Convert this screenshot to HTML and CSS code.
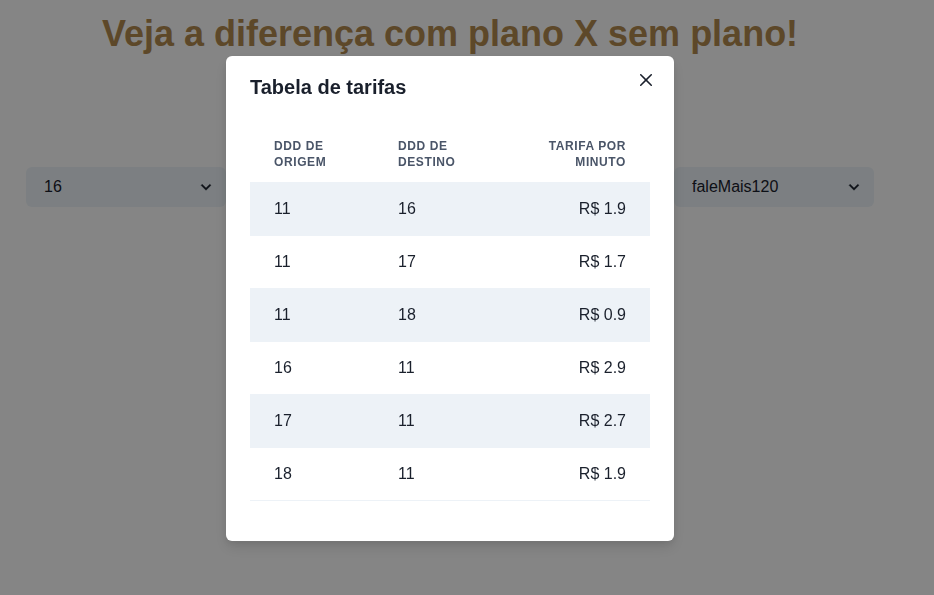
FILE: index.html
```html
<!DOCTYPE html>
<html lang="pt-BR">
<head>
<meta charset="utf-8">
<meta name="viewport" content="width=device-width, initial-scale=1">
<title>Tabela de tarifas</title>
<link rel="stylesheet" href="styles.css">
</head>
<body>
<main class="page">
  <h1 class="page-title">Veja a diferença com plano X sem plano!</h1>
  <form class="filters">
    <div class="field">
      <select class="select" aria-label="Origem"><option>16</option></select>
      <svg class="select-icon" viewBox="0 0 24 24" aria-hidden="true"><path d="M16.59 8.59L12 13.17 7.41 8.59 6 10l6 6 6-6z"/></svg>
    </div>
    <div class="field field-plan">
      <select class="select" aria-label="Plano"><option>faleMais120</option></select>
      <svg class="select-icon" viewBox="0 0 24 24" aria-hidden="true"><path d="M16.59 8.59L12 13.17 7.41 8.59 6 10l6 6 6-6z"/></svg>
    </div>
  </form>
</main>
<div class="overlay">
  <section class="modal" role="dialog" aria-modal="true" aria-labelledby="modal-title">
    <header class="modal-header">
      <h2 class="modal-title" id="modal-title">Tabela de tarifas</h2>
      <button class="close" type="button" aria-label="Fechar">
        <svg class="close-icon" viewBox="0 0 24 24" aria-hidden="true"><path d="M.439 21.44a1.5 1.5 0 0 0 2.122 2.121l9.262-9.261a.25.25 0 0 1 .354 0l9.262 9.263a1.5 1.5 0 1 0 2.122-2.121L14.3 12.177a.25.25 0 0 1 0-.354l9.263-9.262A1.5 1.5 0 0 0 21.439.44L12.177 9.7a.25.25 0 0 1-.354 0L2.561.44A1.5 1.5 0 0 0 .439 2.561L9.7 11.823a.25.25 0 0 1 0 .354z"/></svg>
      </button>
    </header>
    <div class="modal-body">
      <table class="rates">
        <thead>
          <tr><th class="col-area" scope="col">DDD de origem</th><th scope="col">DDD de destino</th><th class="price" scope="col">Tarifa por minuto</th></tr>
        </thead>
        <tbody>
          <tr><td>11</td><td>16</td><td class="price">R$ 1.9</td></tr>
          <tr><td>11</td><td>17</td><td class="price">R$ 1.7</td></tr>
          <tr><td>11</td><td>18</td><td class="price">R$ 0.9</td></tr>
          <tr><td>16</td><td>11</td><td class="price">R$ 2.9</td></tr>
          <tr><td>17</td><td>11</td><td class="price">R$ 2.7</td></tr>
          <tr><td>18</td><td>11</td><td class="price">R$ 1.9</td></tr>
        </tbody>
      </table>
    </div>
  </section>
</div>
</body>
</html>
```
FILE: styles.css
```css
* {
  box-sizing: border-box;
}

body {
  margin: 0;
  background: #fff;
  color: #1a202c;
  font: 16px/24px "Liberation Sans", Arial, sans-serif;
}

.page {
  padding: 10px 60px 0 26px;
}

.page-title {
  margin: 0;
  color: #b38b50;
  font-size: 36px;
  line-height: 48px;
  text-align: center;
}

.filters {
  display: grid;
  grid-template-columns: repeat(4, 1fr);
  gap: 16px;
  margin-top: 109px;
}

.field {
  position: relative;
}

.field-plan {
  grid-column: 4;
}

.select {
  appearance: none;
  width: 100%;
  height: 40px;
  padding: 0 32px 0 16px;
  border: 2px solid transparent;
  border-radius: 6px;
  background: #edf4f9;
  color: inherit;
  font: inherit;
}

.select-icon {
  position: absolute;
  top: 10px;
  right: 10px;
  width: 20px;
  height: 20px;
  fill: currentColor;
  stroke: currentColor;
  stroke-width: 0.4;
  pointer-events: none;
}

.overlay {
  position: fixed;
  inset: 0;
  padding: 56px 34px 0 0;
  background: rgba(0, 0, 0, 0.48);
  overflow: auto;
}

.modal {
  width: 100%;
  max-width: 448px;
  margin: 0 auto;
  padding-bottom: 32px;
  border-radius: 6px;
  background: #fff;
  box-shadow: 0 7px 14px 0 rgba(0, 0, 0, 0.1), 0 3px 6px 0 rgba(0, 0, 0, 0.07);
}

.modal-header {
  display: flex;
  align-items: flex-start;
  justify-content: space-between;
  padding: 8px 12px 8px 24px;
}

.modal-title {
  margin: 8px 0;
  font-size: 20px;
  line-height: 30px;
}

.close {
  display: flex;
  align-items: center;
  justify-content: center;
  width: 32px;
  height: 32px;
  padding: 0;
  border: 0;
  border-radius: 6px;
  background: none;
  color: inherit;
}

.close-icon {
  width: 12px;
  height: 12px;
  fill: currentColor;
}

.modal-body {
  padding: 8px 24px;
}

.rates {
  width: 100%;
  border-collapse: collapse;
  font-variant-numeric: lining-nums tabular-nums;
  line-height: 20px;
}

.rates th,
.rates td {
  padding: 16px 24px;
  border-bottom: 1px solid #edf2f7;
  text-align: left;
}

.rates th {
  padding: 12px 24px;
  color: #4a5568;
  font-size: 12px;
  line-height: 16px;
  letter-spacing: 0.6px;
  text-transform: uppercase;
}

.rates .col-area {
  width: 124px;
}

.rates .price {
  text-align: right;
}

.rates tbody tr:nth-child(odd) {
  background: #edf2f7;
}
```
